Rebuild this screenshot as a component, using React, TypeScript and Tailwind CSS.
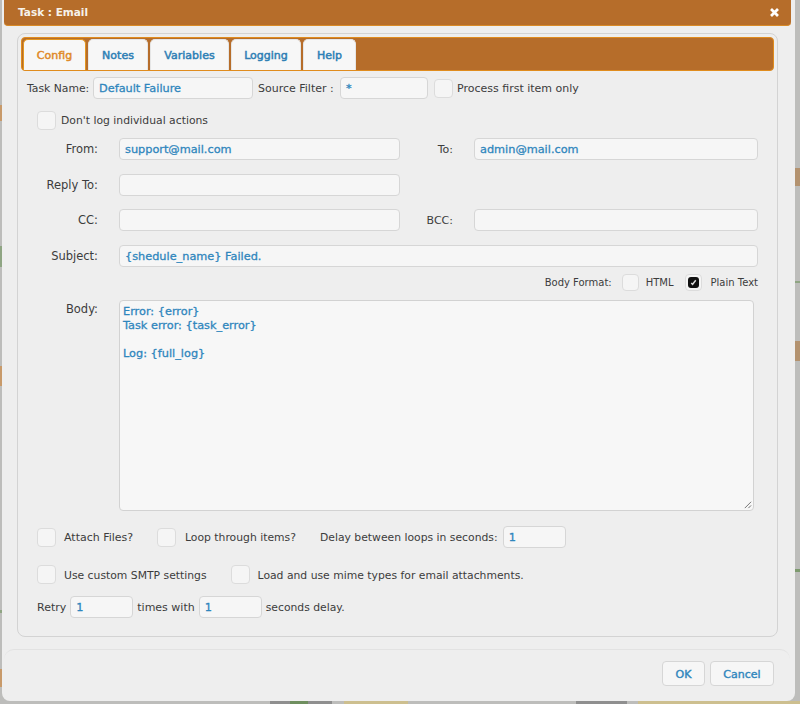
import React from "react";

function Check({ checked = false, small = false }: { checked?: boolean; small?: boolean }) {
  return (
    <span className={`flex shrink-0 items-center justify-center rounded-[4px] border border-[#dcdcdc] bg-[#f5f5f5] ${small ? "h-[17px] w-[17px]" : "h-[19px] w-[19px]"}`}>
      {checked && (
        <span className="flex h-[11px] w-[11px] items-center justify-center rounded-[3px] bg-[#111]">
          <svg viewBox="0 0 10 10" className="h-[9px] w-[9px]">
            <path d="M2.5 5.5 L4 7 L7.5 2.5" fill="none" stroke="#ddd" strokeWidth="1.6" />
          </svg>
        </span>
      )}
    </span>
  );
}

function Field({ value = "", className = "" }: { value?: string; className?: string }) {
  return (
    <div className={`flex h-[22px] shrink-0 items-center rounded-[4px] border border-[#d6d6d6] bg-[#f6f6f6] pl-[5px] pt-[2px] text-[11.3px] whitespace-nowrap text-[#2f86bd] [-webkit-text-stroke:0.3px_#2f86bd] ${className}`}>
      {value}
    </div>
  );
}

function Tab({ name, className = "", active = false }: { name: string; className?: string; active?: boolean }) {
  return (
    <div
      className={`flex h-[31px] items-center justify-center rounded-t-[5px] border border-b-0 bg-[#f7f7f7] pt-[2px] text-[11px] ${className} ${
        active
          ? "border-[#e3961f] text-[#e08a28] [-webkit-text-stroke:0.5px_#e08a28]"
          : "border-[#e6e6e6] text-[#2f7fb5] [-webkit-text-stroke:0.5px_#2f7fb5]"
      }`}
    >
      {name}
    </div>
  );
}

function Label({ children }: { children: React.ReactNode }) {
  return <span className="w-[77px] shrink-0 pt-[2px] text-right text-[11.5px] text-[#3c3c3c]">{children}</span>;
}

function RightLabel({ children }: { children: React.ReactNode }) {
  return <span className="w-[53px] pt-[2px] text-right text-[11px] text-[#3c3c3c]">{children}</span>;
}

export default function App() {
  return (
    <div className="relative h-[704px] w-[800px] overflow-hidden bg-[#bdbdbb] font-['DejaVu_Sans',sans-serif]">
      <div className="absolute right-0 top-[168px] h-[18px] w-[5px] bg-[#b3926f]" />
      <div className="absolute right-0 top-[341px] h-[20px] w-[5px] bg-[#b3926f]" />
      <div className="absolute right-0 top-[281px] h-[2px] w-[5px] bg-[#8fa583]" />
      <div className="absolute right-0 top-[569px] h-[3px] w-[5px] bg-[#7d9a6e]" />
      <div className="absolute left-0 top-[105px] h-[16px] w-[2px] bg-[#c89a6a]" />
      <div className="absolute left-0 top-[246px] h-[21px] w-[2px] bg-[#8fa583]" />
      <div className="absolute left-0 top-[366px] h-[20px] w-[2px] bg-[#c89a6a]" />
      <div className="absolute left-0 top-[610px] h-[3px] w-[2px] bg-[#8fa583]" />
      <div className="absolute left-0 top-[669px] h-[18px] w-[2px] bg-[#c89a6a]" />
      <div className="absolute bottom-0 left-[270px] h-[3px] w-[62px] bg-[#8f8f8f]" />
      <div className="absolute bottom-0 left-[290px] h-[3px] w-[18px] bg-[#6f8f5f]" />
      <div className="absolute bottom-0 left-[344px] h-[3px] w-[64px] bg-[#cdbf8f]" />
      <div className="absolute bottom-0 left-[576px] h-[3px] w-[51px] bg-[#8f8f8f]" />
      <div className="absolute bottom-0 right-0 h-[3px] w-[162px] bg-[#cdbf8f]" />

      <div className="relative ml-[2px] flex h-[701px] w-[793px] flex-col rounded-b-[8px] bg-[#eeeeee] px-[2px]">
        <div className="flex h-[26px] w-[786.5px] shrink-0 items-center justify-between rounded-b-[4px] border-b border-[#d98a26] bg-[#b66d2a] pl-[14px] pr-[11px]">
          <span className="text-[10.5px] font-bold text-[#f7f2ea]">Task : Email</span>
          <svg viewBox="0 0 12 12" className="h-[11px] w-[11px]">
            <path d="M2.2 2.2 L9.8 9.8 M9.8 2.2 L2.2 9.8" stroke="#fff" strokeWidth="3" />
          </svg>
        </div>

        <div className="ml-[13px] mt-[7px] flex h-[604px] w-[761px] shrink-0 flex-col rounded-[8px] border border-[#d3d3d3] px-[3px] pt-[3px]">
          <div className="flex h-[34px] shrink-0 items-end gap-[2px] rounded-[4px] border border-[#e08c1e] bg-[#b66d2a] pl-[1px]">
            <Tab name="Config" className="w-[63px]" active />
            <Tab name="Notes" className="w-[60px]" />
            <Tab name="Variables" className="w-[79px]" />
            <Tab name="Logging" className="w-[70px]" />
            <Tab name="Help" className="w-[53px]" />
          </div>

          <div className="mt-[6px] flex items-center pl-[6px] text-[10.8px] whitespace-nowrap text-[#3c3c3c]">
            <span className="w-[66px] pt-[2px]">Task Name:</span>
            <Field value="Default Failure" className="w-[160px]" />
            <span className="ml-[5px] w-[82px] pt-[2px] text-[11px]">Source Filter :</span>
            <Field value="*" className="w-[88px]" />
            <span className="ml-[6px]"><Check /></span>
            <span className="ml-[4px] pt-[2px] text-[11px]">Process first item only</span>
          </div>

          <div className="ml-[16px] mt-[12px] flex items-center gap-[5px] text-[10.8px] text-[#3c3c3c]">
            <Check />
            <span className="pt-[2px]">Don't log individual actions</span>
          </div>

          <div className="mt-[8px] flex items-center">
            <Label>From:</Label>
            <Field value="support@mail.com" className="ml-[21px] w-[281px]" />
            <RightLabel>To:</RightLabel>
            <Field value="admin@mail.com" className="ml-[21px] w-[284px]" />
          </div>

          <div className="mt-[14px] flex items-center">
            <Label>Reply To:</Label>
            <Field className="ml-[21px] w-[281px]" />
          </div>

          <div className="mt-[13px] flex items-center">
            <Label>CC:</Label>
            <Field className="ml-[21px] w-[281px]" />
            <RightLabel>BCC:</RightLabel>
            <Field className="ml-[21px] w-[284px]" />
          </div>

          <div className="mt-[14px] flex items-center">
            <Label>Subject:</Label>
            <Field value="{shedule_name} Failed." className="ml-[21px] w-[639px]" />
          </div>

          <div className="mt-[5px] flex h-[20px] items-center justify-end pr-[16px] text-[10px] text-[#3c3c3c]">
            <span>Body Format:</span>
            <span className="ml-[10px]"><Check small /></span>
            <span className="ml-[7px]">HTML</span>
            <span className="ml-[11px]"><Check checked small /></span>
            <span className="ml-[9px]">Plain Text</span>
          </div>

          <div className="mt-[8px] flex items-start">
            <span className="mt-[1px] w-[77px] shrink-0 text-right text-[11.5px] text-[#3c3c3c]">Body:</span>
            <div className="relative ml-[21px] h-[211px] w-[635px] rounded-[4px] border border-[#d2d2d2] bg-[#f7f7f7] pl-[3px] pt-[4px] text-[11.3px] leading-[14px] text-[#2f86bd] [-webkit-text-stroke:0.3px_#2f86bd]">
              <div>Error: {"{error}"}</div>
              <div>Task error: {"{task_error}"}</div>
              <div className="mt-[14px]">Log: {"{full_log}"}</div>
              <svg viewBox="0 0 10 10" className="absolute bottom-[1px] right-[1px] h-[9px] w-[9px]">
                <path d="M2 9 L9 2 M6 9 L9 6" stroke="#666" strokeWidth="1" />
              </svg>
            </div>
          </div>

          <div className="ml-[16px] mt-[15px] flex items-center text-[10.8px] text-[#3c3c3c]">
            <Check />
            <span className="ml-[8px] w-[70px] pt-[2px] text-[11px] whitespace-nowrap">Attach Files?</span>
            <span className="ml-[23px]"><Check /></span>
            <span className="ml-[9px] pt-[2px]">Loop through items?</span>
            <span className="ml-[24px] pt-[2px]">Delay between loops in seconds:</span>
            <Field value="1" className="ml-[5px] w-[63px]" />
          </div>

          <div className="ml-[16px] mt-[16px] flex items-center text-[10.8px] text-[#3c3c3c]">
            <Check />
            <span className="ml-[8px] pt-[4px]">Use custom SMTP settings</span>
            <span className="ml-[24px]"><Check /></span>
            <span className="ml-[8px] pt-[4px]">Load and use mime types for email attachments.</span>
          </div>

          <div className="ml-[16px] mt-[12px] flex items-center text-[10.8px] text-[#3c3c3c]">
            <span className="pt-[2px] text-[11px]">Retry</span>
            <Field value="1" className="ml-[4px] w-[63px]" />
            <span className="ml-[4px] pt-[2px] text-[11px]">times with</span>
            <Field value="1" className="ml-[4px] w-[63px]" />
            <span className="ml-[4px] pt-[2px]">seconds delay.</span>
          </div>
        </div>

        <div className="mt-[12px] flex h-[51px] w-[786px] shrink-0 items-start justify-end gap-[5px] rounded-t-[10px] border-t border-[#e2e2e2] pr-[16px] pt-[11px]">
          <button className="h-[25px] w-[43px] rounded-[4px] border border-[#d6d6d6] bg-[#f6f6f6] pt-[3px] text-[11px] text-[#2f86bd] [-webkit-text-stroke:0.4px_#2f86bd]">OK</button>
          <button className="h-[25px] w-[64px] rounded-[4px] border border-[#d6d6d6] bg-[#f6f6f6] pt-[3px] text-[11px] text-[#2f86bd] [-webkit-text-stroke:0.4px_#2f86bd]">Cancel</button>
        </div>
      </div>
    </div>
  );
}
